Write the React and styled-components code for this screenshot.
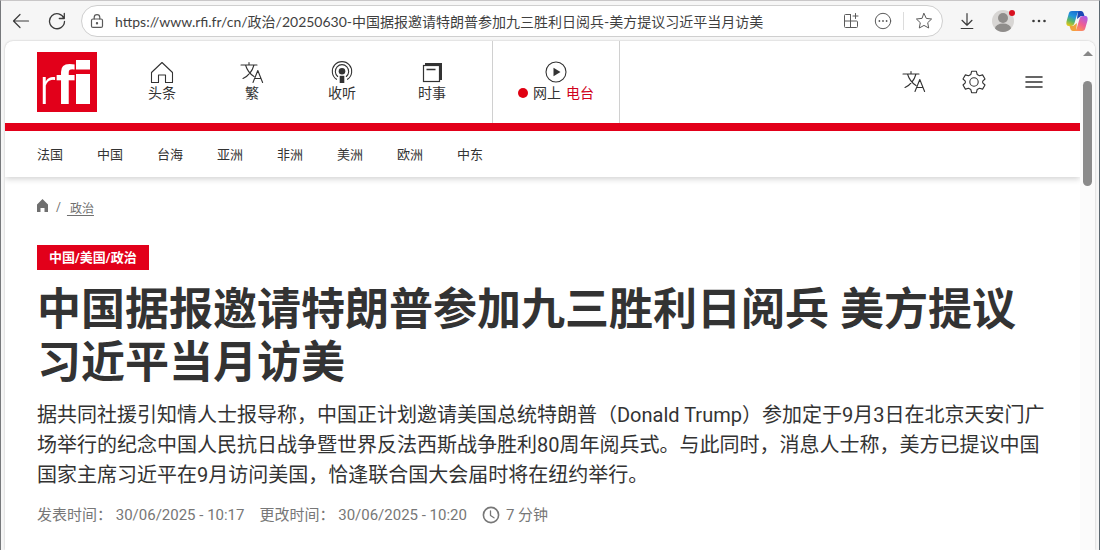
import styled, { createGlobalStyle } from 'styled-components';

const red = '#e2001a';
const ink = '#333333';
const grey = '#6f6f6f';

const GlobalStyle = createGlobalStyle`
    * {
        box-sizing: border-box;
    }
    body {
        margin: 0;
        overflow: hidden;
        background: #f6f6f6;
        color: ${ink};
        font-family: Roboto, 'Noto Sans CJK SC', sans-serif;
    }
    button {
        padding: 0;
        border: none;
        background: none;
        color: inherit;
        font: inherit;
        cursor: pointer;
    }
    a {
        color: inherit;
        text-decoration: none;
    }
    svg {
        display: block;
        flex: none;
    }
`;

const Window = styled.div`
    display: flex;
    flex-direction: column;
    height: 100vh;
    border-top: 1px solid #c9c7c8;
    border-left: 1px solid #77797c;
    border-right: 1px solid #5c6870;
`;

const Toolbar = styled.div`
    display: flex;
    align-items: center;
    height: 40px;
    flex: none;
    padding: 0 2px;
    color: #3b3b3b;
`;

const ToolButton = styled.button`
    display: flex;
    align-items: center;
    justify-content: center;
    width: ${({ $width }) => $width || 36}px;
    height: 32px;
    flex: none;
`;

const AddressBar = styled.div`
    display: flex;
    align-items: center;
    flex: 1;
    height: 32px;
    min-width: 0;
    margin: 0 6px;
    padding: 0 2px 0 8px;
    border: 1px solid #cfcfcf;
    border-radius: 16px;
    background: #fff;
    color: #5a5a5a;
`;

const AddressInput = styled.input`
    flex: 1;
    min-width: 0;
    margin-left: 11px;
    padding: 0;
    border: none;
    outline: none;
    background: none;
    color: #3f3f3f;
    font: 14px Lato, 'Noto Sans CJK SC', sans-serif;
`;

const Separator = styled.span`
    width: 1px;
    height: 18px;
    margin: 0 4px;
    background: #dcdcdc;
`;

const Avatar = styled.span`
    position: relative;
    display: block;
`;

const AvatarBadge = styled.span`
    position: absolute;
    top: 0;
    right: -1px;
    width: 6px;
    height: 6px;
    border-radius: 50%;
    background: #d8101f;
`;

const Viewport = styled.div`
    display: flex;
    flex: 1;
    min-height: 0;
    margin: 0 4px;
    border-radius: 8px 8px 0 0;
    background: #fff;
    box-shadow: 0 0 2px rgba(0, 0, 0, 0.25);
    overflow: hidden;
`;

const Page = styled.div`
    flex: 1;
    min-width: 0;
`;

const Scrollbar = styled.div`
    display: flex;
    flex-direction: column;
    align-items: center;
    width: 15px;
    flex: none;
    padding-top: 10px;
    gap: 25px;
    background: #fbfbfb;
`;

const Thumb = styled.div`
    width: 9px;
    height: 105px;
    border-radius: 5px;
    background: #8b8b8b;
`;

const Header = styled.header`
    box-shadow: 0 2px 6px rgba(0, 0, 0, 0.18);
`;

const HeaderTop = styled.div`
    display: flex;
    align-items: stretch;
    height: 90px;
    padding: 0 16px 0 32px;
    border-bottom: 8px solid ${red};
`;

const LogoLink = styled.a`
    align-self: center;
    margin-right: 20px;
    svg {
        overflow: visible;
    }
`;

const NavLink = styled.a`
    display: flex;
    flex-direction: column;
    align-items: center;
    width: 90px;
    padding-top: 20px;
    font-size: 14px;
    line-height: 16px;
`;

const RadioLink = styled(NavLink)`
    width: 128px;
    margin-left: 15px;
    border-left: 1px solid #d0d0d0;
    border-right: 1px solid #d0d0d0;
`;

const LiveLabel = styled.span`
    display: flex;
    align-items: center;
    gap: 5px;
    em {
        color: #d0021b;
        font-style: normal;
    }
`;

const LiveDot = styled.span`
    width: 10px;
    height: 10px;
    border-radius: 50%;
    background: #e00012;
`;

const Actions = styled.div`
    display: flex;
    margin-left: auto;
`;

const ActionButton = styled.button`
    display: flex;
    align-items: center;
    justify-content: center;
    width: 60px;
`;

const SubNav = styled.nav`
    display: flex;
    gap: 34px;
    padding: 2px 32px 0;
    font-size: 13px;
    line-height: 44px;
`;

const Article = styled.main`
    padding: 21px 32px 0;
`;

const Breadcrumb = styled.nav`
    display: flex;
    align-items: center;
    gap: 6px;
    height: 18px;
    color: ${grey};
    font-size: 12px;
`;

const CrumbLink = styled.a`
    text-decoration: underline;
    text-underline-offset: 2px;
    white-space: pre;
`;

const Tag = styled.a`
    display: inline-block;
    margin-top: 29px;
    padding: 0 12px;
    background: ${red};
    color: #fff;
    font-size: 13px;
    font-weight: 700;
    line-height: 25px;
    vertical-align: top;
`;

const Title = styled.h1`
    margin: 14px 0 0;
    font-size: 44px;
    font-weight: 700;
    line-height: 53px;
`;

const Lead = styled.p`
    margin: 10px 0 0;
    font-size: 20px;
    line-height: 30px;
`;

const Meta = styled.div`
    display: flex;
    align-items: center;
    gap: 15px;
    margin-top: 14px;
    color: #777;
    font-size: 15px;
    line-height: 22px;
`;

const ReadingTime = styled.span`
    display: flex;
    align-items: center;
    gap: 6px;
`;

const Icon = ({ size = 20, width = 1, children }) => (
    <svg
        width={size}
        height={size}
        viewBox={`0 0 ${size} ${size}`}
        fill="none"
        stroke="currentColor"
        strokeWidth={width}
        strokeLinecap="round"
        strokeLinejoin="round"
        aria-hidden="true"
    >
        {children}
    </svg>
);

const BackIcon = () => (
    <Icon size={18} width={1.2}>
        <path d="M16.5 9H1.500M8 2.500L1.500 9L8 15.500" />
    </Icon>
);

const ReloadIcon = () => (
    <Icon size={18} width={1.3}>
        <path d="M16 6.500A7.500 7.500 0 1 0 16.500 9.500M16.300 1.500V6.500H11.300" />
    </Icon>
);

const LockIcon = () => (
    <Icon size={14} width={1.2}>
        <rect x="1.500" y="5" width="11" height="8.400" rx="1.500" />
        <path d="M4.200 5V3.500a2.800 2.800 0 0 1 5.600 0V5" />
        <circle cx="7" cy="9.200" r=".6" fill="currentColor" />
    </Icon>
);

const AppsIcon = () => (
    <Icon size={18}>
        <path d="M8.500 2.500H3.500a1 1 0 0 0-1 1V14.500a1 1 0 0 0 1 1H14.500a1 1 0 0 0 1-1V10a1 1 0 0 0-1-1H2.500M8.500 2.500V15.500M13.500 1.500V6.500M11 4H16" />
    </Icon>
);

const ReaderIcon = () => (
    <Icon size={18}>
        <circle cx="9" cy="9" r="7.700" />
        <g fill="currentColor" stroke="none">
            <circle cx="5.400" cy="9" r=".9" />
            <circle cx="9" cy="9" r=".9" />
            <circle cx="12.600" cy="9" r=".9" />
        </g>
    </Icon>
);

const StarIcon = () => (
    <Icon size={18}>
        <path d="M9 1.500L11.300 6.400L16.600 7L12.700 10.700L13.700 16L9 13.400L4.300 16L5.300 10.700L1.400 7L6.700 6.400Z" />
    </Icon>
);

const DownloadIcon = () => (
    <Icon size={18} width={1.2}>
        <path d="M9 1.500V13M4 8.300L9 13.200L14 8.300M3.200 16.500H14.800" />
    </Icon>
);

const MoreIcon = () => (
    <Icon size={18}>
        <g fill="currentColor" stroke="none">
            <circle cx="3.500" cy="9" r="1.300" />
            <circle cx="9" cy="9" r="1.300" />
            <circle cx="14.500" cy="9" r="1.300" />
        </g>
    </Icon>
);

const ProfileIcon = () => (
    <svg width="22" height="22" viewBox="0 0 22 22" aria-hidden="true">
        <circle cx="11" cy="11" r="11" fill="#d8d6d4" />
        <circle cx="11" cy="8" r="5" fill="#8f8d8b" />
        <path d="M3 18.500a8 5 0 0 1 16 0a11 11 0 0 1-16 0Z" fill="#8f8d8b" />
    </svg>
);

const CopilotIcon = () => (
    <svg width="22" height="22" viewBox="0 0 22 22" aria-hidden="true">
        <defs>
            <linearGradient id="cool" x1="0.600" y1="0" x2="0.200" y2="1">
                <stop offset="0" stopColor="#1a70d0" />
                <stop offset=".35" stopColor="#2196dc" />
                <stop offset=".65" stopColor="#58b56a" />
                <stop offset="1" stopColor="#e8c813" />
            </linearGradient>
            <linearGradient id="warm" x1="0.800" y1="0" x2="0.200" y2="1">
                <stop offset="0" stopColor="#a95bea" />
                <stop offset=".5" stopColor="#ee5d94" />
                <stop offset="1" stopColor="#ff9a4a" />
            </linearGradient>
        </defs>
        <path d="M12 1H15C16.500 1 17.300 2 17.700 3.500L18.500 6H15L11 9Z" fill="#1b48b5" />
        <path d="M10 21H7C5.500 21 4.700 20 4.300 18.500L3.500 16H7L11 13Z" fill="#f0a33c" />
        <path d="M6 1H14C12.300 1 11.700 2.500 11.200 4L8.500 13C7.900 15 7 16 5 16H3C.5 16 0 14 .5 11.500L2.500 4.500C3 2 4 1 6 1Z" fill="url(#cool)" />
        <path d="M16 21H8C9.700 21 10.300 19.500 10.800 18L13.500 9C14.100 7 15 6 17 6H19C21.500 6 22 8 21.500 10.500L19.500 17.500C19 20 18 21 16 21Z" fill="url(#warm)" />
    </svg>
);

const HomeIcon = () => (
    <Icon size={24} width={1.1}>
        <path d="M1.500 11.500L12 1.500L22.500 11.500V21.500H15.500V14H8.500V21.500H1.500Z" />
    </Icon>
);

const LanguageIcon = () => (
    <Icon size={24} width={1.1}>
        <path d="M1 4H17M9 1.500V4M14 4C12.500 9.500 8 15 3 17.500M5.500 4C7 9 10 13 14 15.500M13 21.500L17.800 9.500L22.600 21.500M14.600 17.500H21" />
    </Icon>
);

const ListenIcon = () => (
    <Icon size={24} width={1.1}>
        <path d="M6.500 18.300A9.700 9.700 0 1 1 17.500 18.300M7.700 15.500A6.700 6.700 0 1 1 16.300 15.500" />
        <circle cx="12" cy="10.300" r="3.300" fill="currentColor" stroke="none" />
        <rect x="9.700" y="14.800" width="4.600" height="7.200" fill="currentColor" stroke="none" />
    </Icon>
);

const NewsIcon = () => (
    <Icon size={24} width={1.2}>
        <rect x="5" y="2" width="17" height="17" fill="currentColor" stroke="none" />
        <rect x="3.500" y="4.500" width="16" height="16" fill="#fff" strokeLinejoin="miter" />
        <path d="M6.500 8.500H15.500" strokeWidth="1.600" strokeLinecap="butt" />
    </Icon>
);

const PlayIcon = () => (
    <Icon size={24} width={1.1}>
        <circle cx="12" cy="11" r="10" />
        <path d="M9.500 6.800L16.500 11L9.500 15.200Z" fill="currentColor" stroke="none" />
    </Icon>
);

const GearIcon = () => (
    <Icon size={24} width={1.1}>
        <path d="M9.600 1.300H14.400L15.200 4.500L17.500 5.800L20.600 4.900L23 9L20.700 11.200V12.800L23 15L20.600 19.100L17.500 18.200L15.200 19.500L14.400 22.700H9.600L8.800 19.500L6.500 18.200L3.400 19.100L1 15L3.300 12.800V11.200L1 9L3.400 4.900L6.500 5.800L8.800 4.500Z" />
        <circle cx="12" cy="12" r="4.200" />
    </Icon>
);

const MenuIcon = () => (
    <Icon size={24} width={1.6}>
        <path d="M4 7H20M4 12H20M4 17H20" />
    </Icon>
);

const CrumbHomeIcon = () => (
    <svg width="13" height="18" viewBox="0 0 13 18" fill="currentColor" aria-hidden="true">
        <path d="M5.500 1L11 6.500V14H7.500V10H3.500V14H0V6.500Z" />
    </svg>
);

const ClockIcon = () => (
    <Icon size={18} width={1.6}>
        <circle cx="9" cy="9" r="7.600" />
        <path d="M8.500 4.800V9.500L12 11.800" strokeWidth="1.300" />
    </Icon>
);

const Logo = () => (
    <svg width="60" height="60" viewBox="0 0 60 60" role="img" aria-label="rfi">
        <rect width="60" height="60" fill={red} />
        <text x="2" y="52" fill="#fff" fontSize="50" fontFamily="Roboto, sans-serif">
            <tspan fontWeight="300">r</tspan>
            <tspan fontFamily="Liberation Sans, sans-serif" fontSize="56" fontWeight="700">f</tspan>
        </text>
        <path d="M39 8H53V17.500H39ZM39 22H53V52H39Z" fill="#fff" />
    </svg>
);

const mainNav = [
    { id: 1, display: '头条', icon: <HomeIcon /> },
    { id: 2, display: '繁', icon: <LanguageIcon /> },
    { id: 3, display: '收听', icon: <ListenIcon /> },
    { id: 4, display: '时事', icon: <NewsIcon /> }
];

const regions = ['法国', '中国', '台海', '亚洲', '非洲', '美洲', '欧洲', '中东'];

const BrowserBar = () => (
    <Toolbar>
        <ToolButton aria-label="Back">
            <BackIcon />
        </ToolButton>
        <ToolButton aria-label="Reload">
            <ReloadIcon />
        </ToolButton>
        <AddressBar>
            <LockIcon />
            <AddressInput
                aria-label="Address"
                defaultValue="https://www.rfi.fr/cn/政治/20250630-中国据报邀请特朗普参加九三胜利日阅兵-美方提议习近平当月访美"
            />
            <ToolButton aria-label="Apps" $width={32}>
                <AppsIcon />
            </ToolButton>
            <ToolButton aria-label="Page options" $width={32}>
                <ReaderIcon />
            </ToolButton>
            <Separator />
            <ToolButton aria-label="Favourite" $width={32}>
                <StarIcon />
            </ToolButton>
        </AddressBar>
        <ToolButton aria-label="Downloads">
            <DownloadIcon />
        </ToolButton>
        <ToolButton aria-label="Profile">
            <Avatar>
                <ProfileIcon />
                <AvatarBadge />
            </Avatar>
        </ToolButton>
        <ToolButton aria-label="More">
            <MoreIcon />
        </ToolButton>
        <ToolButton aria-label="Copilot" $width={40}>
            <CopilotIcon />
        </ToolButton>
    </Toolbar>
);

const SiteHeader = () => (
    <Header>
        <HeaderTop>
            <LogoLink href="#">
                <Logo />
            </LogoLink>
            {mainNav.map(item => (
                <NavLink key={item.id} href="#">
                    {item.icon}
                    <span>{item.display}</span>
                </NavLink>
            ))}
            <RadioLink href="#">
                <PlayIcon />
                <LiveLabel>
                    <LiveDot />
                    <span>网上</span>
                    <em>电台</em>
                </LiveLabel>
            </RadioLink>
            <Actions>
                <ActionButton aria-label="语言">
                    <LanguageIcon />
                </ActionButton>
                <ActionButton aria-label="设置">
                    <GearIcon />
                </ActionButton>
                <ActionButton aria-label="菜单">
                    <MenuIcon />
                </ActionButton>
            </Actions>
        </HeaderTop>
        <SubNav>
            {regions.map(name => (
                <a key={name} href="#">
                    {name}
                </a>
            ))}
        </SubNav>
    </Header>
);

const App = () => {
    return (
        <>
            <GlobalStyle />
            <Window>
                <BrowserBar />
                <Viewport>
                    <Page>
                        <SiteHeader />
                        <Article>
                            <Breadcrumb>
                                <a href="#" aria-label="首页">
                                    <CrumbHomeIcon />
                                </a>
                                <span>/</span>
                                <CrumbLink href="#"> 政治</CrumbLink>
                            </Breadcrumb>
                            <Tag href="#">中国/美国/政治</Tag>
                            <Title>中国据报邀请特朗普参加九三胜利日阅兵 美方提议习近平当月访美</Title>
                            <Lead>
                                据共同社援引知情人士报导称，中国正计划邀请美国总统特朗普（Donald Trump）参加定于9月3日在北京天安门广场举行的纪念中国人民抗日战争暨世界反法西斯战争胜利80周年阅兵式。与此同时，消息人士称，美方已提议中国国家主席习近平在9月访问美国，恰逢联合国大会届时将在纽约举行。
                            </Lead>
                            <Meta>
                                <span>发表时间： 30/06/2025 - 10:17</span>
                                <span>更改时间： 30/06/2025 - 10:20</span>
                                <ReadingTime>
                                    <ClockIcon />7 分钟
                                </ReadingTime>
                            </Meta>
                        </Article>
                    </Page>
                    <Scrollbar>
                        <svg width="10" height="5" viewBox="0 0 10 5" fill="#868686" aria-hidden="true">
                            <path d="M5 0L10 5H0Z" />
                        </svg>
                        <Thumb />
                    </Scrollbar>
                </Viewport>
            </Window>
        </>
    );
};

export default App;
